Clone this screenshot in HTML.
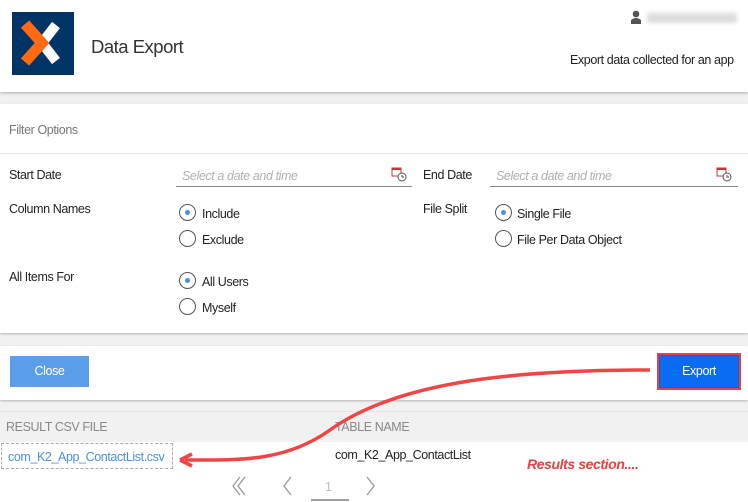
<!DOCTYPE html>
<html><head><style>
*{margin:0;padding:0;box-sizing:border-box}
body{width:748px;height:502px;overflow:hidden;background:#f1f1f1;font-family:"Liberation Sans",Arial,sans-serif;font-size:12.5px;color:#222;position:relative;letter-spacing:-0.4px}
.a{position:absolute}
.radio{position:absolute;width:17px;height:17px;border:1px solid #555;border-radius:50%;background:#fff}
.radio.on::after{content:"";position:absolute;left:5px;top:5px;width:5px;height:5px;border-radius:50%;background:#4a90e2}
.rl{position:absolute;color:#222}
.inp{position:absolute;border-bottom:1px solid #888;height:22px}
.ph{position:absolute;color:#b0b0b0;font-style:italic}
</style></head><body>
<div class="a" style="left:0;top:0;width:748px;height:92px;background:#fff;box-shadow:0 1px 3px rgba(0,0,0,.3)"></div>
<div class="a" style="left:12px;top:12px;width:62px;height:63px;background:#003366"></div>
<svg class="a" style="left:12px;top:12px" width="62" height="63">
<polyline points="44,13 30,31 44,49" stroke="#fff" stroke-width="10" fill="none"/>
<polyline points="13,12 30,31 13,50" stroke="#ff6a13" stroke-width="11" fill="none"/>
</svg>
<div class="a" style="left:91px;top:36px;font-size:18.5px;color:#333;letter-spacing:-0.5px">Data Export</div>
<svg class="a" style="left:631px;top:10px" width="10" height="14"><circle cx="5" cy="4" r="3.3" fill="#555"/><path d="M0,14 L0,10 Q5,6 10,10 L10,14Z" fill="#555"/></svg>
<div class="a" style="left:647px;top:13px;width:90px;height:10px;background:#ddd;filter:blur(2px)"></div>
<div class="a" style="left:570px;top:53px">Export data collected for an app</div>

<div class="a" style="left:0;top:104px;width:748px;height:229px;background:#fff;box-shadow:0 1px 2px rgba(0,0,0,.25)"></div>
<div class="a" style="left:9px;top:123px;color:#777">Filter Options</div>
<div class="a" style="left:0;top:153px;width:748px;height:1px;background:#e3e3e3"></div>
<div class="a" style="left:9px;top:168px">Start Date</div>
<div class="inp" style="left:176px;top:165px;width:236px"></div>
<div class="ph" style="left:182px;top:169px">Select a date and time</div>
<div class="a" style="left:423px;top:168px">End Date</div>
<div class="inp" style="left:490px;top:165px;width:248px"></div>
<div class="ph" style="left:496px;top:169px">Select a date and time</div>
<svg class="a" style="left:391px;top:166px" width="16" height="16"><rect x="1" y="2" width="9" height="8" fill="#fff" stroke="#c33" stroke-width="1"/><rect x="1" y="2" width="9" height="2" fill="#c33"/><circle cx="11" cy="11" r="4" fill="#fff" stroke="#555"/><path d="M11,9v2h2" stroke="#555" fill="none"/></svg>
<svg class="a" style="left:716px;top:166px" width="16" height="16"><rect x="1" y="2" width="9" height="8" fill="#fff" stroke="#c33" stroke-width="1"/><rect x="1" y="2" width="9" height="2" fill="#c33"/><circle cx="11" cy="11" r="4" fill="#fff" stroke="#555"/><path d="M11,9v2h2" stroke="#555" fill="none"/></svg>

<div class="a" style="left:9px;top:202px">Column Names</div>
<div class="radio on" style="left:179px;top:204px"></div><div class="rl" style="left:202px;top:207px">Include</div>
<div class="radio" style="left:179px;top:230px"></div><div class="rl" style="left:202px;top:233px">Exclude</div>
<div class="a" style="left:423px;top:202px">File Split</div>
<div class="radio on" style="left:495px;top:204px"></div><div class="rl" style="left:517px;top:207px">Single File</div>
<div class="radio" style="left:495px;top:230px"></div><div class="rl" style="left:517px;top:233px">File Per Data Object</div>
<div class="a" style="left:9px;top:270px">All Items For</div>
<div class="radio on" style="left:179px;top:272px"></div><div class="rl" style="left:202px;top:275px">All Users</div>
<div class="radio" style="left:179px;top:298px"></div><div class="rl" style="left:202px;top:301px">Myself</div>

<div class="a" style="left:0;top:346px;width:748px;height:54px;background:#fff;box-shadow:0 1px 2px rgba(0,0,0,.25)"></div>
<div class="a" style="left:10px;top:356px;width:79px;height:31px;background:#5b9ee9;color:#fff;text-align:center;line-height:31px">Close</div>
<div class="a" style="left:657px;top:353px;width:84px;height:37px;border:2px solid #e84040;background:#1a5fb8;padding:1px"><div style="background:#0a6cf2;width:100%;height:100%;color:#fff;text-align:center;line-height:31px">Export</div></div>

<div class="a" style="left:0;top:411px;width:748px;height:1px;background:#e3e3e3"></div>
<div class="a" style="left:6px;top:420px;color:#888">RESULT CSV FILE</div>
<div class="a" style="left:335px;top:420px;color:#888">TABLE NAME</div>
<div class="a" style="left:0;top:442px;width:748px;height:60px;background:#fff"></div>
<div class="a" style="left:1px;top:443px;width:172px;height:26px;border:1px dashed #aaa"></div>
<div class="a" style="left:8px;top:450px;color:#4a90e2">com_K2_App_ContactList.csv</div>
<div class="a" style="left:335px;top:448px">com_K2_App_ContactList</div>
<div class="a" style="left:527px;top:456px;color:#e84040;font-weight:bold;font-style:italic;font-size:14px">Results section....</div>
<svg class="a" style="left:225px;top:474px" width="160" height="28" fill="none" stroke="#999" stroke-width="1.3"><path d="M15,3l-7,9 7,9M20,3l-7,9 7,9M66,3l-7,9 7,9M142,3l7,9-7,9"/><path d="M86,26h38" stroke="#666"/></svg>
<div class="a" style="left:325px;top:480px;color:#bbb">1</div>

<svg class="a" style="left:0;top:340px" width="748" height="140" fill="none"><path d="M650,30 C520,30 400,40 330,90 C285,122 240,120 185,120" stroke="#f04545" stroke-width="3.5"/><path d="M180,120 l12,-6 M180,120 l12,6" stroke="#f04545" stroke-width="3.5"/></svg>
</body></html>
